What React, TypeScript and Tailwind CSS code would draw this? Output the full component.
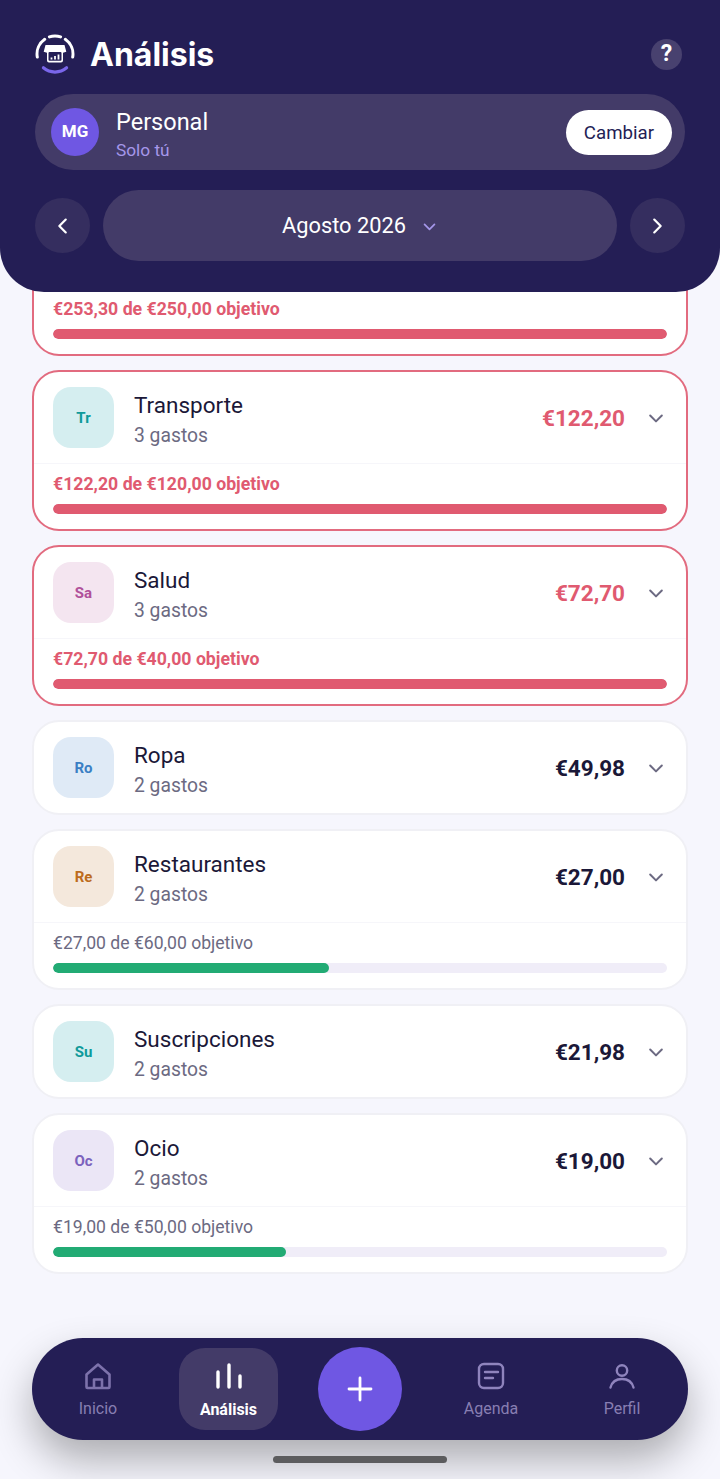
import React from "react";

type Cat = {
  name: string; sub: string; amount: string; abbr: string; tile: string; ink: string;
  over?: boolean; goal?: string; pct?: number;
};

const cats: Cat[] = [
  { name: "Alimentación", sub: "9 gastos", amount: "€253,30", abbr: "Al", tile: "bg-[#dff3e8]", ink: "text-[#1fa971]", over: true, goal: "€253,30 de €250,00 objetivo", pct: 100 },
  { name: "Transporte", sub: "3 gastos", amount: "€122,20", abbr: "Tr", tile: "bg-[#d5eef0]", ink: "text-[#0f9a9a]", over: true, goal: "€122,20 de €120,00 objetivo", pct: 100 },
  { name: "Salud", sub: "3 gastos", amount: "€72,70", abbr: "Sa", tile: "bg-[#f4e5f0]", ink: "text-[#b0509a]", over: true, goal: "€72,70 de €40,00 objetivo", pct: 100 },
  { name: "Ropa", sub: "2 gastos", amount: "€49,98", abbr: "Ro", tile: "bg-[#dfeaf6]", ink: "text-[#3b7fc4]" },
  { name: "Restaurantes", sub: "2 gastos", amount: "€27,00", abbr: "Re", tile: "bg-[#f4e8dc]", ink: "text-[#bd6c1c]", goal: "€27,00 de €60,00 objetivo", pct: 45 },
  { name: "Suscripciones", sub: "2 gastos", amount: "€21,98", abbr: "Su", tile: "bg-[#d5eef0]", ink: "text-[#0f9a9a]" },
  { name: "Ocio", sub: "2 gastos", amount: "€19,00", abbr: "Oc", tile: "bg-[#ebe6f6]", ink: "text-[#7b62bd]", goal: "€19,00 de €50,00 objetivo", pct: 38 },
];

function Chevron({ dir, className }: { dir: "l" | "r" | "d"; className: string }) {
  const d = dir === "l" ? "M15 5l-7 7 7 7" : dir === "r" ? "M9 5l7 7-7 7" : "M5 9l7 7 7-7";
  return (
    <svg viewBox="0 0 24 24" fill="none" stroke="currentColor" strokeWidth="2.400" strokeLinecap="round" strokeLinejoin="round" className={className}>
      <path d={d} />
    </svg>
  );
}

function Logo() {
  return (
    <svg viewBox="0 0 40 40" className="w-10 h-10 shrink-0" fill="none">
      <path d="M2.300 23.100A18 18 0 0 1 9.700 5.300M14.400 2.900a18 18 0 0 1 11.200 0M30.300 5.300A18 18 0 0 1 37.700 23.100" stroke="#fff" strokeWidth="3" strokeLinecap="round" />
      <path d="M8.400 33.800a18 18 0 0 0 23.200 0" stroke="#7a66ea" strokeWidth="3.200" strokeLinecap="round" />
      <path d="M10.500 11h19l1.800 6.800-3.300 1V26.500a2 2 0 0 1-2 2H14a2 2 0 0 1-2-2V18.800l-3.300-1z" fill="#fff" />
      <rect x="13.500" y="18" width="13" height="8.800" rx="1" fill="#241e55" />
      <path d="M16.500 25.500v-2M20 25.500v-3.500M23.500 25.500v-5" stroke="#fff" strokeWidth="1.800" />
    </svg>
  );
}

function CategoryCard({ c }: { c: Cat }) {
  return (
    <div className={`rounded-[27px] bg-white border-2 ${c.over ? "border-[#e26b7f]" : "border-[#f0f0f5]"}`}>
      <div className="flex items-center h-[91px] pl-[19px] pr-[20px]">
        <div className={`w-[61px] h-[61px] pt-[1px] rounded-[18px] flex items-center justify-center ${c.tile}`}>
          <span className={`text-[15px] font-bold ${c.ink}`}>{c.abbr}</span>
        </div>
        <div className="ml-[20px] flex-1 pt-[6px]">
          <div className="text-[22.500px] leading-[30px] text-[#1b1838]">{c.name}</div>
          <div className="text-[19.300px] leading-[31px] text-[#6c6a82]">{c.sub}</div>
        </div>
        <div className={`pt-[2px] text-[22.500px] font-bold ${c.over ? "text-[#e05a70]" : "text-[#1b1838]"}`}>{c.amount}</div>
        <Chevron dir="d" className="w-[20px] h-[20px] ml-[21px] text-[#6c6a82]" />
      </div>
      {c.goal && (
        <div className="border-t border-[#f6f6fa] h-[66px] px-[19px] pt-[9px]">
          <div className={`leading-[22px] ${c.over ? "text-[17.700px] font-bold text-[#e05a70]" : "text-[17.600px] text-[#6c6a82]"}`}>{c.goal}</div>
          <div className="mt-[9px] h-[10px] rounded-full bg-[#f0edf8] overflow-hidden">
            <div className={`h-full rounded-full ${c.over ? "bg-[#e05a70]" : "bg-[#22ab74]"}`} style={{ width: `${c.pct}%` }} />
          </div>
        </div>
      )}
    </div>
  );
}

function NavItem({ label, children }: { label: string; children: React.ReactNode }) {
  return (
    <div className="flex flex-col items-center w-[100px] h-[54px] text-[#887eb2]">
      {children}
      <span className="text-[16px] leading-[20px] mt-[9px] shrink-0">{label}</span>
    </div>
  );
}

export default function App() {
  return (
    <div className="relative w-[720px] h-[1479px] overflow-hidden bg-[#f6f6fd]" style={{ fontFamily: "Roboto, sans-serif" }}>
      <header className="relative z-10 h-[292px] rounded-b-[44px] bg-[#241e55] px-[35px] pt-[32px]">
        <div className="flex items-center h-[44px]">
          <Logo />
          <h1 className="ml-[15px] pt-[2px] text-[32px] font-bold text-white flex-1" style={{ fontFamily: "Inter, sans-serif" }}>Análisis</h1>
          <div className="w-[31px] h-[31px] mr-[3px] rounded-full bg-[#48416f] flex items-center justify-center text-white text-[23px] font-bold">?</div>
        </div>
        <div className="mt-[18px] flex items-center h-[76px] rounded-[38px] bg-[#433b68] pl-[16px] pr-[13px]">
          <div className="w-[48px] h-[48px] rounded-full bg-[#6f57e3] flex items-center justify-center text-white text-[17px] font-bold">MG</div>
          <div className="ml-[17px] flex-1 pt-[5px]">
            <div className="text-[23.500px] leading-[30px] text-white">Personal</div>
            <div className="text-[17.300px] leading-[26px] text-[#a597ea]">Solo tú</div>
          </div>
          <div className="w-[106px] h-[45px] pt-[2px] rounded-full bg-white flex items-center justify-center text-[18.700px] text-[#241e55]">Cambiar</div>
        </div>
        <div className="mt-[20px] flex items-center gap-[13px]">
          <div className="w-[55px] h-[55px] rounded-full bg-[#352e5f] flex items-center justify-center text-white">
            <Chevron dir="l" className="w-[22px] h-[22px]" />
          </div>
          <div className="flex-1 h-[71px] pt-[1px] rounded-[36px] bg-[#433b68] flex items-center justify-center text-white text-[21.800px]">
            Agosto 2026
            <Chevron dir="d" className="w-[17px] h-[17px] ml-[15px] text-[#a597ea]" />
          </div>
          <div className="w-[55px] h-[55px] rounded-full bg-[#352e5f] flex items-center justify-center text-white">
            <Chevron dir="r" className="w-[22px] h-[22px] -ml-[1px]" />
          </div>
        </div>
      </header>

      <main className="-mt-[97px] px-[32px] flex flex-col gap-[14px]">
        {cats.map((c) => <CategoryCard key={c.name} c={c} />)}
      </main>

      <nav className="absolute left-[32px] bottom-[39px] w-[656px] h-[102px] rounded-[51px] bg-[#241e55] shadow-[0_20px_40px_rgba(0,0,0,0.3)] flex items-center px-[16px]">
        <NavItem label="Inicio">
          <svg viewBox="0 0 28 28" className="w-[28px] h-[28px] shrink-0" fill="none" stroke="#7d72ab" strokeWidth="2.600" strokeLinejoin="round">
            <path d="M2.500 12.500L14 2.500l11.500 10V25a1 1 0 0 1-1 1h-21a1 1 0 0 1-1-1zM10 26V17.500h8V26" />
          </svg>
        </NavItem>
        <div className="ml-[31px] w-[99px] h-[82px] rounded-[26px] bg-[#433b68] flex flex-col items-center text-white pt-[14px]">
          <svg viewBox="0 0 28 28" className="w-[28px] h-[28px] shrink-0" fill="none" stroke="currentColor" strokeWidth="3.400" strokeLinecap="round">
            <path d="M3 10v15M14 3v22M25 14v11" />
          </svg>
          <span className="text-[16px] leading-[20px] mt-[10px] font-bold">Análisis</span>
        </div>
        <div className="ml-[40px] mr-[39px] w-[84px] h-[84px] rounded-full bg-[#6f57e3] flex items-center justify-center text-white">
          <svg viewBox="0 0 28 28" className="w-[28px] h-[28px]" fill="none" stroke="currentColor" strokeWidth="2.800" strokeLinecap="round">
            <path d="M14 3v22M3 14h22" />
          </svg>
        </div>
        <NavItem label="Agenda">
          <svg viewBox="0 0 28 28" className="w-[28px] h-[28px] shrink-0" fill="none" stroke="#8f84bd" strokeWidth="2.400" strokeLinecap="round">
            <rect x="2" y="2" width="24" height="24" rx="5" />
            <path d="M8 10h13M8 16h8" />
          </svg>
        </NavItem>
        <div className="ml-[31px]">
          <NavItem label="Perfil">
            <svg viewBox="0 0 28 28" className="w-[28px] h-[28px] shrink-0" fill="none" stroke="#8f84bd" strokeWidth="2.400" strokeLinecap="round">
              <circle cx="14" cy="8.500" r="5.200" />
              <path d="M2.500 25.500c1.500-5.500 6-8.500 11.500-8.500s10 3 11.500 8.500" />
            </svg>
          </NavItem>
        </div>
      </nav>

      <div className="absolute left-[273px] bottom-[16px] w-[174px] h-[7px] rounded-full bg-[#5c5c5e]" />
    </div>
  );
}
